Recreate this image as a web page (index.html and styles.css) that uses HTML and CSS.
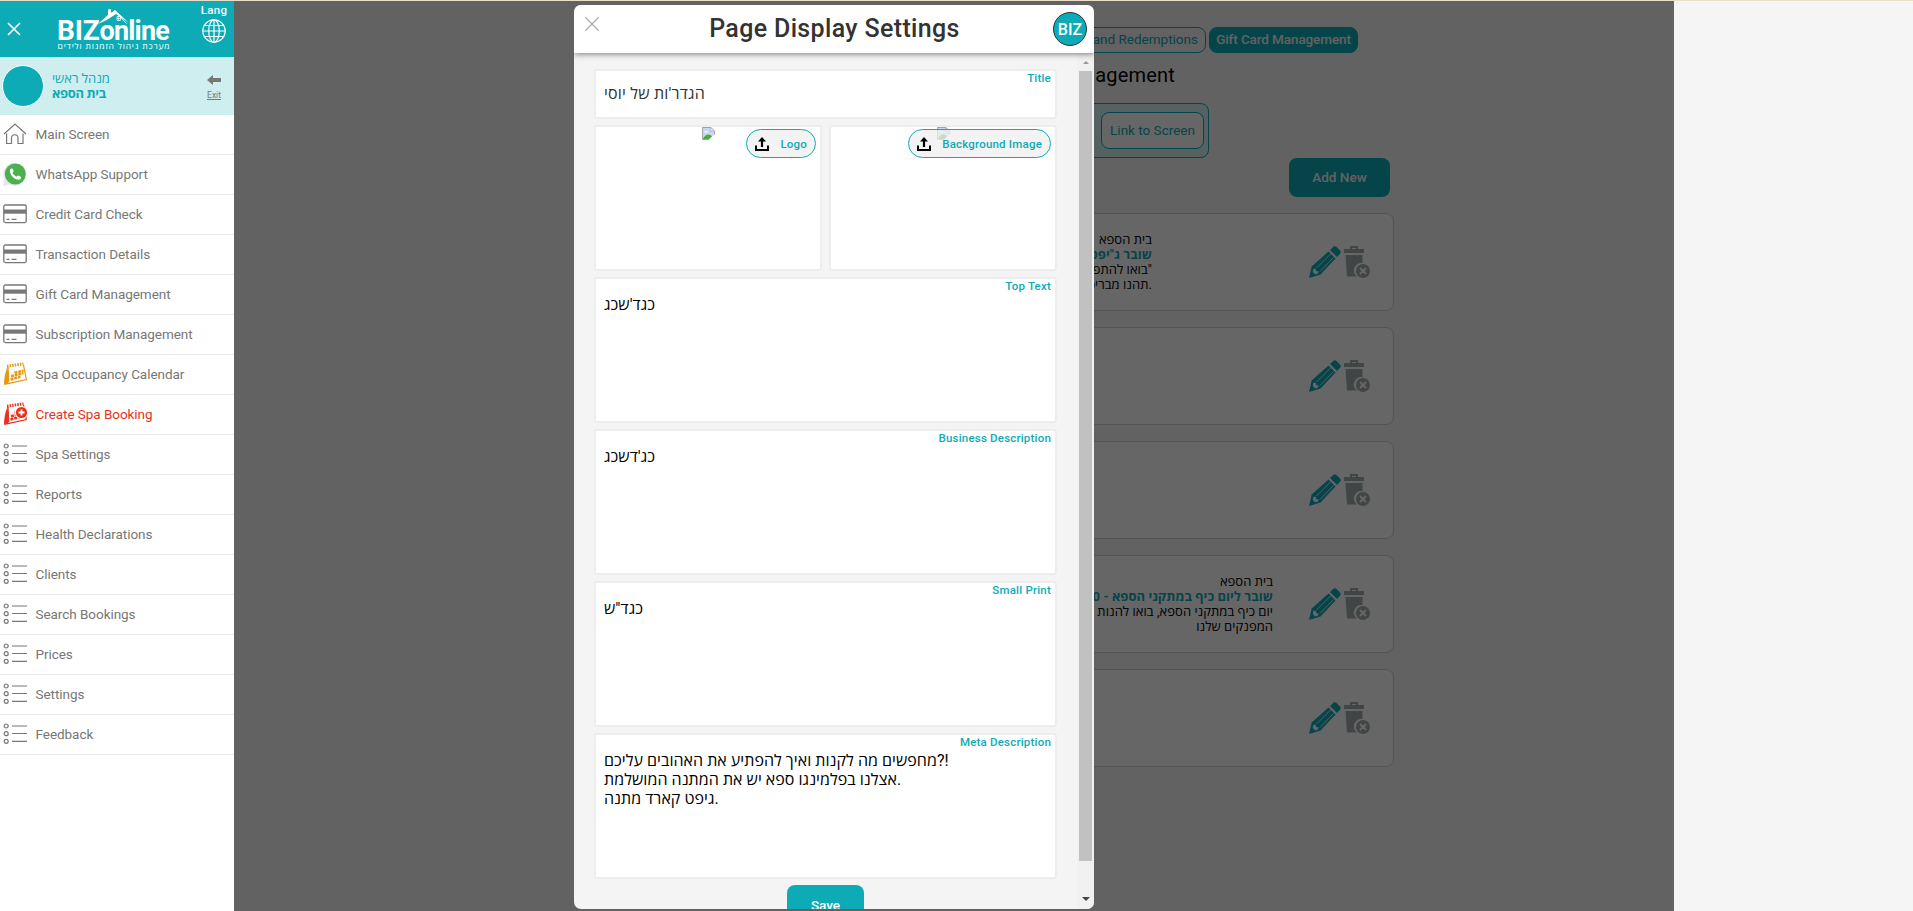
FILE: index.html
```html
<!DOCTYPE html>
<html lang="en">
<head>
<meta charset="utf-8">
<title>Page Display Settings</title>
<link rel="stylesheet" href="styles.css">
</head>
<body>
<svg width="0" height="0" class="defs">
  <symbol id="i-home" viewBox="0 0 24 24"><path d="M1 12 12 2l11 10M3.600 11.500V21.500H8.500V16a3 3 0 0 1 6.500 0v5.500h5V11.500" fill="none" stroke="#777" stroke-width="1.200"/></symbol>
  <symbol id="i-wa" viewBox="0 0 24 24"><path d="M0 24 1.500 18A11.500 11.500 0 1 1 6 22.500Z" fill="#e3e8ea"/><circle cx="12.300" cy="12" r="10.500" fill="#4caf50"/><path d="M8.500 6.500c-1.600.3-2 2-1.400 4 1 3.400 3.600 6 7 7 2 .5 3.700-.2 4-1.800.2-1-.2-1.200-2.700-2.300-.8-.2-1.200 1.200-1.800 1.300-1.500-.3-3.700-2.500-4-3.900.3-.7 1.200-1.100 1-1.800-.8-2-1.200-2.500-2.100-2.500Z" fill="#fff"/></symbol>
  <symbol id="i-card" viewBox="0 0 24 24"><rect x=".8" y="3" width="22.400" height="17.600" rx="1.500" fill="none" stroke="#777" stroke-width="1.300"/><path d="M1 7.500h22v4.200H1z" fill="#777"/><path d="M3.500 17.300h3M8.500 17.300h5" stroke="#777" stroke-width="1.300"/></symbol>
  <symbol id="i-list" viewBox="0 0 24 24"><g fill="none" stroke="#777" stroke-width="1.200"><circle cx="3.200" cy="4" r="2"/><circle cx="3.200" cy="11.700" r="2"/><circle cx="3.200" cy="19.300" r="2"/><path d="M9 4h15M9 11.500h15M9 19.300h15"/></g></symbol>
  <symbol id="i-cal" viewBox="0 0 24 24"><g fill="none" stroke="currentColor"><path d="M5 5 5.800 19.500 1.500 22.300 23.300 17.500 20.500 3" stroke-width="1.200"/><path d="M4 4.200 20.500 1.800" stroke-width="3" stroke-dasharray="1.500 1.100"/><path d="m11.500 10.800 9-2.300M8 14.300l12.500-3.200M7.500 17.500l10-2.600" stroke-width="2.500" stroke-dasharray="3 .8"/></g><path d="M4.500 4.500 5.800 19.500 1 22.800Q1 13 4.500 4.500Z" fill="currentColor"/></symbol>
  <symbol id="i-edit" viewBox="0 0 32 32"><path d="M21 4 24.500.8q1.500-1 3 .3l3.500 3.500q1.300 1.500.2 3L28 11Z" fill="#0dabb6"/><path d="M19.500 5.500 26.500 12.500 11.500 28.500 0 32 2.700 20.500Z" fill="#0dabb6"/><path d="M7.500 22 21.500 8M11 25.500 24.500 11.500" stroke="#fff" stroke-width=".8"/><path d="m4.500 22.500 2.500.4.400 2.200 2.200.3-.5 2-3 1.100-2.400-2.400Z" fill="#fff"/></symbol>
  <symbol id="i-trash" viewBox="0 0 26 32"><path d="M0 3h6V0h8v3h6v4H0ZM8 2v1h4V2ZM1.500 9h17v8A7.500 7.500 0 0 0 13 30.500H3Z" fill="#a5adb0" fill-rule="evenodd"/><circle cx="19" cy="25" r="7" fill="#a5adb0"/><path d="m16 22 6 6m0-6-6 6" stroke="#fff" stroke-width="2"/></symbol>
  <symbol id="i-up" viewBox="0 0 14 14"><path d="M1 8.500V13h12V8.500" fill="none" stroke="#000" stroke-width="2"/><path d="M7 0 11 4.500H8.100V10H5.900V4.500H3Z"/></symbol>
  <symbol id="i-broken" viewBox="0 0 14 14"><path d="M.5.500h9l4 4v9H.5Z" fill="#c6d8f4" stroke="#999"/><path d="M9.500.5v4h4Z" fill="#fff" stroke="#999" stroke-width=".7"/><path d="M2.500 6a1.500 1.500 0 0 1 2-1.500 1.700 1.700 0 0 1 2 1.500Z" fill="#fff"/><path d="M1 13q2-5 6-5 2 0 4 2L8 13Z" fill="#4faa3c"/><path d="M7 14 14 7.500v6.500Z" fill="#fff"/></symbol>
</svg>

<div class="strip"></div>
<div class="page">
  <aside class="side">
    <header class="side-head">
      <svg class="close" viewBox="0 0 14 14"><path d="m1 1 12 12M13 1 1 13" stroke="#fff" stroke-width="1.700"/></svg>
      <div class="logo">
        <div class="brand"><span class="biz">BIZ</span><span class="online">online</span></div>
        <svg class="roof" viewBox="0 0 34 18"><path d="M1 16 11 7V1.500l3-.5.200 4L18 2l14 13-13-9Q11 12 1 16Z" fill="#fff"/><path d="m17.500 2.500 12 13" stroke="#fff"/><path d="M20 8.500h3.500v4H20zM21.700 8.500v4M20 10.500h3.500" fill="none" stroke="#fff" stroke-width=".7"/></svg>
        <div class="tagline" dir="rtl">מערכת ניהול הזמנות ולידים</div>
      </div>
      <div class="lang"><span>Lang</span>
        <svg viewBox="0 0 24 24"><g fill="none" stroke="#fff" stroke-width="1.200"><circle cx="12" cy="12" r="11.200"/><ellipse cx="12" cy="12" rx="5.300" ry="11.200"/><path d="M12 .8v22.400M.8 12h22.400M2.500 6.500h19M2.500 17.500h19"/></g></svg>
      </div>
    </header>
    <div class="user">
      <div class="avatar"></div>
      <div class="who"><span>מנהל ראשי</span><b>בית הספא</b></div>
      <div class="exit"><svg viewBox="0 0 14 10"><path d="M0 5 6 0v3h8v4H6v3Z" fill="#777"/></svg><u>Exit</u></div>
    </div>
    <nav class="menu">
      <a><svg><use href="#i-home"/></svg>Main Screen</a>
      <a><svg><use href="#i-wa"/></svg>WhatsApp Support</a>
      <a><svg><use href="#i-card"/></svg>Credit Card Check</a>
      <a><svg><use href="#i-card"/></svg>Transaction Details</a>
      <a><svg><use href="#i-card"/></svg>Gift Card Management</a>
      <a><svg><use href="#i-card"/></svg>Subscription Management</a>
      <a><svg class="amber"><use href="#i-cal"/></svg>Spa Occupancy Calendar</a>
      <a class="red"><svg viewBox="0 0 24 24"><use href="#i-cal"/><circle cx="18.200" cy="10.500" r="6.500" fill="#fff"/><circle cx="18.500" cy="10.500" r="5.600" fill="#e8311c"/><path d="M18.500 7.500v6M15.500 10.500h6" stroke="#fff" stroke-width="1.800"/></svg>Create Spa Booking</a>
      <a><svg><use href="#i-list"/></svg>Spa Settings</a>
      <a><svg><use href="#i-list"/></svg>Reports</a>
      <a><svg><use href="#i-list"/></svg>Health Declarations</a>
      <a><svg><use href="#i-list"/></svg>Clients</a>
      <a><svg><use href="#i-list"/></svg>Search Bookings</a>
      <a><svg><use href="#i-list"/></svg>Prices</a>
      <a><svg><use href="#i-list"/></svg>Settings</a>
      <a><svg><use href="#i-list"/></svg>Feedback</a>
    </nav>
  </aside>

  <main class="content">
    <div class="tabs"><span class="tab">and Redemptions</span><span class="tab on">Gift Card Management</span></div>
    <h2>Management</h2>
    <div class="panel"><span class="link">Link to Screen</span></div>
    <div class="add">Add New</div>
    <div class="cards">
      <div class="card">
        <div class="desc short" dir="rtl"><span>בית הספא</span><b>שובר ג"יפט</b><span>"בואו להתפנק</span><span>.תהנו מבריכה</span></div>
        <svg class="edit"><use href="#i-edit"/></svg><svg class="trash"><use href="#i-trash"/></svg>
      </div>
      <div class="card"><svg class="edit"><use href="#i-edit"/></svg><svg class="trash"><use href="#i-trash"/></svg></div>
      <div class="card"><svg class="edit"><use href="#i-edit"/></svg><svg class="trash"><use href="#i-trash"/></svg></div>
      <div class="card">
        <div class="desc" dir="rtl"><span>בית הספא</span><b>שובר ליום כיף במתקני הספא - 50</b><span>יום כיף במתקני הספא, בואו להנות מ</span><span>המפנקים שלנו</span></div>
        <svg class="edit"><use href="#i-edit"/></svg><svg class="trash"><use href="#i-trash"/></svg>
      </div>
      <div class="card"><svg class="edit"><use href="#i-edit"/></svg><svg class="trash"><use href="#i-trash"/></svg></div>
    </div>
  </main>
  <div class="overlay"></div>
</div>

<section class="modal">
  <header class="modal-head">
    <svg class="x" viewBox="0 0 14 14"><path d="m.5.500 13 13m0-13-13 13" stroke="#aaa" stroke-width="1.200"/></svg>
    <h1>Page Display Settings</h1>
    <div class="badge">BIZ</div>
  </header>
  <div class="modal-body">
    <div class="form">
      <div class="field title"><label>Title</label><p>הגדר'ות של יוסי</p></div>
      <div class="images">
        <div class="field pic"><svg class="broken"><use href="#i-broken"/></svg><div class="upload"><svg><use href="#i-up"/></svg>Logo</div></div>
        <div class="field pic"><svg class="broken"><use href="#i-broken"/></svg><div class="upload"><svg><use href="#i-up"/></svg>Background Image</div></div>
      </div>
      <div class="field area"><label>Top Text</label><p>כגד'שכג</p></div>
      <div class="field area"><label>Business Description</label><p>כג'דשכג</p></div>
      <div class="field area"><label>Small Print</label><p>כגד"ש</p></div>
      <div class="field area"><label>Meta Description</label><p>מחפשים מה לקנות ואיך להפתיע את האהובים עליכם?!<br>אצלנו בפלמינגו ספא יש את המתנה המושלמת.<br>גיפט קארד מתנה.</p></div>
      <div class="save">Save</div>
    </div>
    <div class="scroll"><i class="up"></i><i class="thumb"></i><i class="down"></i></div>
  </div>
</section>
</body>
</html>
```
FILE: styles.css
```css
* { box-sizing: border-box; }
body { margin: 0; width: 1913px; height: 911px; overflow: hidden; position: relative; background: #f5f5f5; font-family: Roboto, "Open Sans", "Liberation Sans", sans-serif; font-size: 14px; color: #000; }
.defs { position: absolute; }
h1, h2, p { margin: 0; font-weight: 400; }
svg { display: block; flex: none; }
.strip { height: 1px; background: #e8dfc9; }
.page { position: relative; display: flex; width: 1674px; height: 910px; }

.side { position: relative; z-index: 2; width: 234px; flex: none; background: #fff; }
.side-head { display: flex; height: 56px; background: #0dabb6; color: #fff; }
.close { width: 14px; height: 14px; margin: 21px 0 0 7px; }
.logo { position: relative; width: 114px; margin-left: 36px; padding-top: 11px; }
.brand { display: flex; align-items: baseline; height: 29px; line-height: 37px; white-space: nowrap; font-weight: 700; }
.biz { font-size: 28px; letter-spacing: -.2px; }
.online { font-size: 27px; letter-spacing: -.8px; }
.roof { position: absolute; left: 40px; top: 7px; width: 34px; height: 18px; }
.tagline { font-size: 8.500px; line-height: 10px; letter-spacing: .85px; white-space: nowrap; text-align: center; }
.lang { display: flex; flex-direction: column; align-items: center; width: 26px; margin-left: 30px; font-size: 11.500px; font-weight: 500; line-height: 15px; padding-top: 2px; letter-spacing: .3px; }
.lang svg { width: 24px; height: 24px; margin-top: 1px; }
.user { display: flex; height: 58px; background: #cfeef0; color: #0dabb6; }
.avatar { width: 42px; height: 42px; margin: 8px 0 0 2px; border: 1px solid #fff; border-radius: 50%; background: #0dabb6; }
.who { display: flex; flex-direction: column; width: 150px; margin: 14px 0 0 8px; line-height: 15px; font-size: 13px; }
.who b { letter-spacing: -.35px; }
.exit { display: flex; flex-direction: column; align-items: center; margin: 18px 0 0 5px; width: 14px; color: #777; font-size: 8.500px; line-height: 12px; }
.exit svg { width: 14px; height: 10px; margin-bottom: 4px; }
.menu a { display: flex; align-items: center; height: 40px; padding: 0 0 1px 3px; gap: 8.500px; border-bottom: 1px solid #ebebeb; color: #777; font-size: 13.500px; letter-spacing: -.05px; }
.menu svg { width: 24px; height: 24px; }
.menu .amber { color: #e8980f; }
.menu .red { color: #e8311c; }

.content { flex: 1; padding: 26px 280px 0 360px; display: flex; flex-direction: column; }
.tabs { display: flex; justify-content: flex-end; gap: 3px; margin-right: 36px; }
.tab { height: 26px; padding: 0 7px; border: 1px solid #0dabb6; border-radius: 8px; color: #0dabb6; line-height: 23px; white-space: nowrap; font-size: 13.500px; }
.tab.on { width: 149px; background: #0dabb6; color: #f5f5f5; text-align: center; font-weight: 500; padding: 0; font-size: 13.500px; letter-spacing: -.1px; }
h2 { align-self: flex-end; margin: 8px 219px 0 0; font-size: 20px; line-height: 28px; letter-spacing: .2px; }
.panel { align-self: flex-end; display: flex; justify-content: flex-end; width: 200px; height: 55px; margin: 14px 185px 0 0; padding: 8px 4px; border: 1px solid #0dabb6; border-radius: 8px; background: #d8f2f4; }
.link { width: 103px; height: 37px; border: 1px solid #0dabb6; border-radius: 8px; background: #fff; color: #0dabb6; line-height: 35px; text-align: center; font-size: 13.500px; }
.add { align-self: flex-end; width: 101px; height: 39px; margin-right: 4px; border-radius: 8px; background: #0dabb6; color: #f5f5f5; line-height: 39px; text-align: center; font-weight: 500; font-size: 13.500px; }
.cards { display: flex; flex-direction: column; gap: 16px; margin-top: 16px; }
.card { display: flex; align-items: flex-start; justify-content: flex-end; height: 98px; padding: 32px 23px 0 0; border: 1px solid #d2d2d2; border-radius: 8px; background: #fff; overflow: hidden; }
.edit { width: 32px; height: 32px; }
.trash { width: 26px; height: 32px; margin-left: 3px; }
.desc { display: flex; flex-direction: column; flex: none; width: 240px; margin: -14px 36px 0 0; line-height: 15px; font-size: 13px; white-space: nowrap; }
.desc.short { margin-right: 157px; }
.desc span { letter-spacing: .05px; }
.desc b { color: #0dabb6; letter-spacing: .05px; }
.overlay { position: absolute; inset: 0; background: rgba(0, 0, 0, .6); }

.modal { position: absolute; z-index: 3; left: 574px; top: 5px; width: 520px; height: 904px; border-radius: 7px; overflow: hidden; background: #f4f4f4; display: flex; flex-direction: column; }
.modal-head { position: relative; z-index: 1; display: flex; flex: none; justify-content: space-between; height: 48px; padding: 0 7px 0 11px; background: #fff; box-shadow: 0 1px 6px rgba(0, 0, 0, .5); }
.x { width: 14px; height: 14px; margin-top: 12px; }
h1 { padding-left: 17px; font-size: 25px; line-height: 47px; font-weight: 500; color: #333; letter-spacing: .35px; }
.badge { width: 34px; height: 34px; margin-top: 7px; border: 1px solid #333; border-radius: 50%; background: #0dabb6; color: #fff; font-size: 16px; font-weight: 500; line-height: 34px; text-align: center; }
.modal-body { display: flex; flex: 1; min-height: 0; }
.form { display: flex; flex-direction: column; gap: 6px; width: 503px; padding: 16px 20px 0; overflow: hidden; }
.field { position: relative; flex: none; border: 2px solid #ededed; border-radius: 3px; background: #fff; }
label { position: absolute; right: 4px; top: 0; font-size: 11.500px; font-weight: 500; line-height: 14px; letter-spacing: .2px; color: #0dabb6; }
.title { height: 50px; }
.title p { padding: 13px 8px 0; font-size: 16px; line-height: 19px; color: #333; letter-spacing: .2px; }
.images { display: flex; justify-content: space-between; flex: none; }
.pic { width: 228px; height: 146px; }
.broken { width: 13px; height: 13px; margin: 0 auto; }
.upload { position: absolute; right: 4px; top: 2px; display: flex; align-items: center; height: 29px; padding: 0 8px; gap: 11px; border: 1px solid #0dabb6; border-radius: 15px; background: rgba(239, 239, 239, .75); color: #0dabb6; font-size: 11.500px; font-weight: 500; letter-spacing: .2px; }
.upload svg { width: 14px; height: 14px; }
.area { height: 146px; }
.area p { padding: 16px 8px; font-size: 16px; line-height: 19px; white-space: nowrap; letter-spacing: .05px; }
.save { flex: none; align-self: center; width: 77px; height: 40px; border-radius: 8px; background: #0dabb6; color: #fff; line-height: 41px; text-align: center; font-weight: 500; font-size: 13.500px; }
.scroll { display: flex; flex-direction: column; align-items: center; width: 17px; background: #f1f1f1; padding-top: 8px; }
.up { border: 3px solid transparent; border-top: 0; border-bottom: 3px solid #999; margin-bottom: 7px; }
.thumb { width: 13px; height: 790px; background: #c1c1c1; }
.down { border: 4px solid transparent; border-bottom: 0; border-top: 4px solid #444; margin-top: 36px; }
```
